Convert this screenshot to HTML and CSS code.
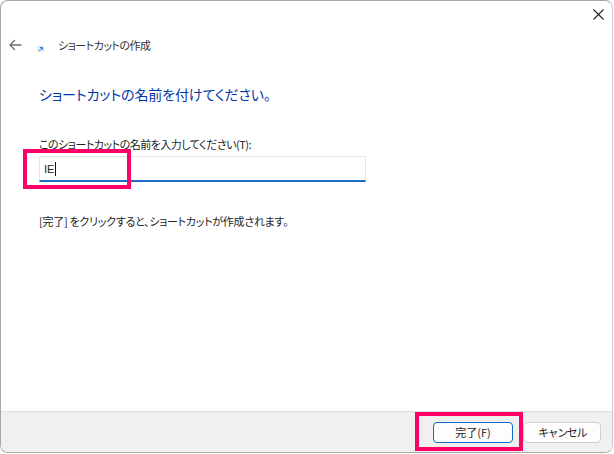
FILE: index.html
```html
<!DOCTYPE html>
<html lang="ja">
<head>
<meta charset="utf-8">
<title>ショートカットの作成</title>
<link rel="stylesheet" href="styles.css">
</head>
<body>
<div class="window">
  <div class="titlebar">
    <svg class="close" width="11" height="11" viewBox="0 0 11 11"><path d="M0.5 0.5 L10.5 10.5 M10.5 0.5 L0.5 10.5" stroke="#222" stroke-width="1.1" fill="none"/></svg>
  </div>
  <div class="nav">
    <svg class="back" width="13" height="12" viewBox="0 0 13 12"><path d="M12.5 6 H1 M6 1 L1 6 L6 11" stroke="#707070" stroke-width="1.3" fill="none"/></svg>
    <svg class="app-icon" width="7" height="6" viewBox="0 0 7 6"><rect x="0" y="0" width="7" height="6" fill="#e4e8ee"/><path d="M2 5 L5 2 M3 1.5 H5.5 V4" stroke="#2a7fd6" stroke-width="1" fill="none"/></svg>
    <span class="nav-title">ショートカットの作成</span>
  </div>
  <main class="content">
    <h1 class="heading">ショートカットの名前を付けてください。</h1>
    <label class="field-label">このショートカットの名前を入力してください(T):</label>
    <div class="input"><span class="input-text">IE</span><span class="caret"></span></div>
    <p class="hint">[完了] をクリックすると、ショートカットが作成されます。</p>
  </main>
  <footer class="footer">
    <button class="btn btn-primary">完了(F)</button>
    <button class="btn btn-cancel">キャンセル</button>
  </footer>
</div>
<div class="mark mark-input"></div>
<div class="mark mark-finish"></div>
</body>
</html>
```
FILE: styles.css
```css
* { box-sizing: border-box; }
html, body { margin: 0; padding: 0; background: #fff; }
body {
  width: 614px;
  height: 454px;
  position: relative;
  overflow: hidden;
  font-family: "Noto Sans CJK JP", "Noto Sans", sans-serif;
  font-feature-settings: "palt";
  color: #222;
}
.window {
  width: 613px;
  height: 453px;
  background: #fff;
  border-top: 1px solid #a8a8a8;
  border-left: 1px solid #a8a8a8;
  border-right: 1px solid #c8c8c8;
  border-bottom: 1px solid #a8a8a8;
  border-radius: 8px;
  display: flex;
  flex-direction: column;
  overflow: hidden;
}
.titlebar {
  height: 29px;
  display: flex;
  justify-content: flex-end;
  align-items: flex-start;
  padding: 8px 8px 0 0;
  flex: none;
}
.nav {
  height: 30px;
  display: flex;
  align-items: center;
  padding-left: 8px;
  flex: none;
}
.back { margin-right: 15px; }
.app-icon { margin-right: 14px; margin-top: 7px; }
.nav-title { font-size: 11px; letter-spacing: -0.5px; color: #333; }
.content { flex: 1; padding: 23px 0 0 38px; }
.heading {
  margin: 0;
  font-size: 14px;
  font-weight: 400;
  line-height: 22px;
  letter-spacing: -0.1px;
  color: #0035a8;
}
.field-label {
  display: block;
  margin-top: 31px;
  font-size: 11px;
  letter-spacing: -0.5px;
  line-height: 16px;
}
.input {
  margin-top: 4px;
  width: 327px;
  height: 26px;
  background: #fff;
  border: 1px solid #e6e6e6;
  border-bottom: 2px solid #1b6ec2;
  display: flex;
  align-items: center;
  padding-left: 4px;
}
.input-text { font-family: "Liberation Sans", sans-serif; font-size: 11px; line-height: 16px; }
.caret { width: 1px; height: 14px; background: #111; margin-left: 1px; }
.hint { margin: 31px 0 0; font-size: 11px; letter-spacing: -0.27px; line-height: 16px; }
.footer {
  height: 41px;
  flex: none;
  background: #f0f0f0;
  border-top: 1px solid #dfdfdf;
  display: flex;
  justify-content: flex-end;
  align-items: center;
  gap: 10px;
  padding-right: 11px;
}
.btn {
  width: 78px;
  height: 21px;
  padding: 0;
  background: #fdfdfd;
  border: 1px solid #d0d0d0;
  border-radius: 4px;
  font-family: inherit;
  font-size: 11px;
  line-height: 16px;
  color: #222;
}
.btn-primary { width: 80px; border: 1px solid #0a6cc8; }
.btn-cancel { letter-spacing: -1.4px; }
.mark { position: absolute; border: 4px solid #ff0066; }
.mark-input { left: 23px; top: 149px; width: 108px; height: 40px; }
.mark-finish { left: 415px; top: 412px; width: 108px; height: 39px; }
```
